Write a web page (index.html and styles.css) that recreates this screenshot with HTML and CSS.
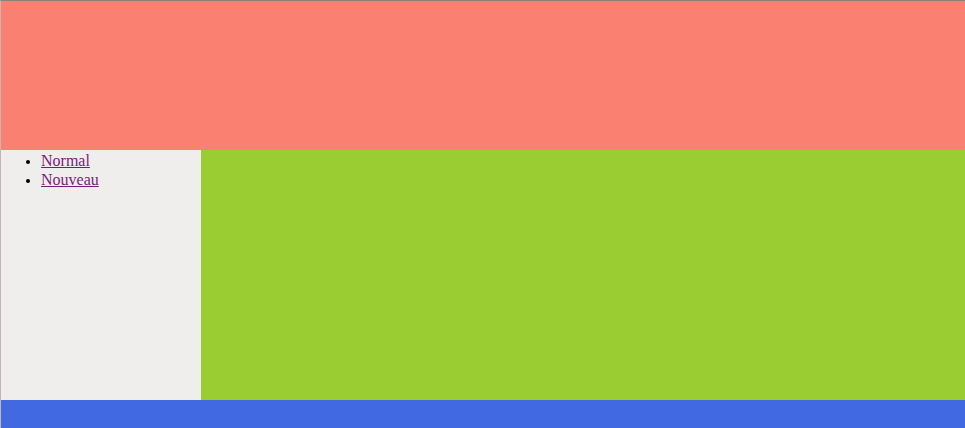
FILE: index.html
```html
<!DOCTYPE html>
<html lang="fr">
<head>
<meta charset="utf-8">
<title>Mise en page</title>
<link rel="stylesheet" href="styles.css">
</head>
<body>
<div class="page">
  <header class="header"></header>
  <div class="main">
    <nav class="sidebar">
      <ul class="menu">
        <li><a href="#normal">Normal</a></li>
        <li><a href="#nouveau">Nouveau</a></li>
      </ul>
    </nav>
    <section class="content"></section>
  </div>
  <footer class="footer"></footer>
</div>
</body>
</html>
```
FILE: styles.css
```css
html, body {
  margin: 0;
  padding: 0;
  background: #ffffff;
}
.page {
  font-family: "Liberation Serif", "Times New Roman", serif;
  font-size: 16px;
  border-top: 1px solid #8f7f7c;
  border-left: 1px solid #c9b6b2;
}
.header {
  height: 149px;
  background: #fa8072;
}
.main {
  display: flex;
  height: 250px;
}
.sidebar {
  width: 200px;
  background: #efeeec;
}
.menu {
  margin: 0;
  padding-left: 40px;
  padding-top: 1px;
  line-height: 19px;
}
.menu li::marker {
  font-size: 13px;
}
.menu a {
  color: #7a1a7a;
}
.content {
  flex: 1;
  background: #9acd32;
}
.footer {
  height: 40px;
  background: #4169e1;
}
```
